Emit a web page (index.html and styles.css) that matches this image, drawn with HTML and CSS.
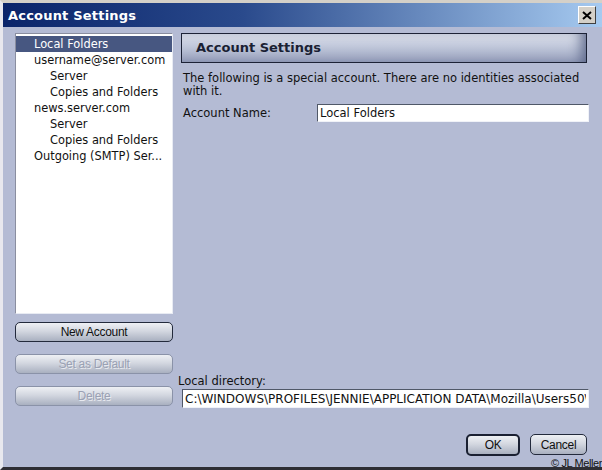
FILE: index.html
```html
<!doctype html>
<html lang="en">
  <head>
    <meta charset="utf-8">
    <title>Account Settings</title>
    <link rel="stylesheet" href="styles.css">
  </head>
  <body>
    <div class="window">
      <div class="titlebar">
        <span class="titlebar__text">Account Settings</span>
        <span class="titlebar__close">
          <svg width="10" height="9" viewBox="0 0 10 9"><path d="M1 1 L9 8 M9 1 L1 8" stroke="#000" stroke-width="2"/></svg>
        </span>
      </div>
      <div class="content">
        <div class="sidebar">
          <div class="tree">
            <div class="tree__item selected">Local Folders</div>
            <div class="tree__item">username@server.com</div>
            <div class="tree__item child">Server</div>
            <div class="tree__item child">Copies and Folders</div>
            <div class="tree__item">news.server.com</div>
            <div class="tree__item child">Server</div>
            <div class="tree__item child">Copies and Folders</div>
            <div class="tree__item">Outgoing (SMTP) Ser...</div>
          </div>
          <button class="btn wide">New Account</button>
          <button class="btn wide" disabled>Set as Default</button>
          <button class="btn wide" disabled>Delete</button>
        </div>
        <div class="main">
          <div class="panel_head">Account Settings</div>
          <p class="desc">The following is a special account. There are no identities associated with it.</p>
          <div class="field_row">
            <label for="acct_name">Account Name:</label>
            <input id="acct_name" class="field" value="Local Folders">
          </div>
          <div class="spacer"></div>
          <label class="dir_label" for="local_dir">Local directory:</label>
          <input id="local_dir" class="field dir" value="C:\WINDOWS\PROFILES\JENNIE\APPLICATION DATA\Mozilla\Users50\default\Mail\Local Folders">
        </div>
      </div>
      <div class="footer">
        <button class="btn ok">OK</button>
        <button class="btn cancel">Cancel</button>
      </div>
      <div class="credit">&copy; JL Meller</div>
    </div>
  </body>
</html>
```

FILE: styles.css
```css
body{
  margin: 0;
  font-family: "DejaVu Sans", Verdana, sans-serif;
  font-size: 11.5px;
  color: #111;
}
.window{
  position: relative;
  width: 602px;
  height: 470px;
  box-sizing: border-box;
  background: #b4bbd4;
  border-top: 3px solid #d4d0c8;
  border-left: 3px solid #e8e8ee;
  border-bottom: 3px solid #2e2e34;
  display: flex;
  flex-direction: column;
  overflow: hidden;
}
/*--------------------------*/
.titlebar{
  height: 24px;
  display: flex;
  align-items: center;
  justify-content: space-between;
  padding: 0 6px 0 5px;
  background: linear-gradient(to right, #0a246a 0%, #2a4a8c 40%, #a6caf0 100%);
  flex-shrink: 0;
}
.titlebar__text{
  color: #fff;
  font-weight: bold;
  font-size: 13px;
  letter-spacing: 0.2px;
}
.titlebar__close{
  width: 16px;
  height: 16px;
  background: #d4d0c8;
  border: 1px solid;
  border-color: #fff #404040 #404040 #fff;
  display: flex;
  align-items: center;
  justify-content: center;
}
/*--------------------------*/
.content{
  display: flex;
  padding: 6px 12px 0 12px;
  gap: 5px;
}
.sidebar{
  width: 158px;
  display: flex;
  flex-direction: column;
  gap: 12px;
}
.tree{
  height: 281px;
  box-sizing: border-box;
  background: #fff;
  border: 1px solid;
  border-color: #8a8ea0 #e8ebf3 #e8ebf3 #8a8ea0;
  padding: 2px 0 0 0;
  margin-bottom: -4px;
  font-size: 11.4px;
}
.tree__item{
  height: 16px;
  line-height: 16px;
  padding-left: 18px;
  white-space: nowrap;
}
.tree__item.child{
  padding-left: 34px;
}
.tree__item.selected{
  background: #475781;
  color: #fff;
}
/*--------------------------*/
.btn{
  font-family: "Liberation Sans", Arial, sans-serif;
  font-size: 12px;
  height: 20px;
  border-radius: 5px;
  border: 1px solid #232a3c;
  background: linear-gradient(to bottom, #eef0f4 0%, #d3d7e0 45%, #a9b0c0 100%);
  color: #111;
  padding: 0;
  letter-spacing: -0.3px;
}
.btn:disabled{
  border-color: #8a92a8;
  color: #9aa1b3;
  text-shadow: 1px 1px 0 #e8eaf0;
}
.btn.wide{
  width: 158px;
}
/*--------------------------*/
.main{
  flex: 1;
  display: flex;
  flex-direction: column;
  height: 375px;
}
.panel_head{
  margin-left: 3px;
  margin-right: 3px;
  height: 28px;
  line-height: 28px;
  padding-left: 14px;
  border: 1px solid #1c2236;
  background: linear-gradient(to bottom, #dfe3ed 0%, #c0c7da 45%, #98a1bd 100%);
  box-shadow: inset -10px 0 14px -6px #5a6588;
  font-weight: bold;
  font-size: 13px;
  color: #1a1f33;
}
.desc{
  margin: 9px 0 0 5px;
  line-height: 13px;
  width: 400px;
}
.field_row{
  display: flex;
  align-items: center;
  margin: 6px 0 0 5px;
}
.field_row label{
  width: 134px;
}
.field{
  font-family: "DejaVu Sans", Verdana, sans-serif;
  font-size: 11.5px;
  background: #fff;
  border: 1px solid;
  border-color: #505868 #f0f2f8 #f0f2f8 #505868;
  height: 18px;
  box-sizing: border-box;
  padding: 0 2px;
  color: #111;
}
.field_row .field{
  width: 272px;
}
.spacer{
  flex: 1;
}
.dir_label{
  margin-bottom: 1px;
}
.field.dir{
  margin-left: 4px;
  width: 407px;
  height: 19px;
  font-size: 12px;
}
/*--------------------------*/
.footer{
  display: flex;
  justify-content: flex-end;
  gap: 10px;
  padding: 26px 15px 0 0;
}
.btn.ok{
  width: 54px;
  height: 22px;
  border: 2px solid #1a2032;
}
.btn.cancel{
  width: 57px;
  height: 21px;
}
.credit{
  position: absolute;
  right: 0;
  bottom: -2px;
  line-height: 12px;
  font-family: "Liberation Sans", Arial, sans-serif;
  font-size: 11px;
  letter-spacing: -0.4px;
  background: #b4bbd4;
  padding: 0 0 0 3px;
  color: #111;
}
```
